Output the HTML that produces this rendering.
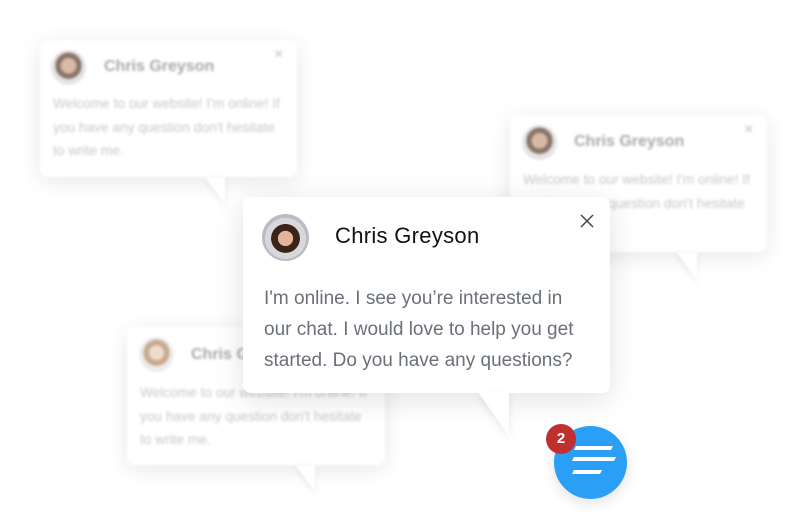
<!DOCTYPE html>
<html><head><style>
body{margin:0;width:809px;height:530px;background:#fff;position:relative;overflow:hidden;font-family:"Liberation Sans",sans-serif}
.c{position:absolute;background:#fff;border-radius:8px;box-shadow:0 4px 22px rgba(0,0,0,.1)}
.bg{filter:blur(1.2px)}
.bg .n{position:absolute;font-size:16px;font-weight:bold;color:#a9a9a9}
.bg .t{position:absolute;font-size:13.7px;line-height:23.5px;color:#c8c8c8;width:236px}
.bg .x{position:absolute;color:#bbb;font-size:16px}
.av{position:absolute;border-radius:50%;background:radial-gradient(circle at 50% 45%,#d9b8a4 0 30%,#8a7468 31% 50%,#e4e4e4 51%)}
.tail{position:absolute;width:0;height:0}
</style></head><body>

<div class="c bg" style="left:40px;top:40px;width:257px;height:137px">
 <div class="av" style="left:11px;top:10px;width:35px;height:35px"></div>
 <div class="n" style="left:64px;top:18px">Chris Greyson</div>
 <div class="x" style="left:234px;top:6px">×</div>
 <div class="t" style="left:13px;top:52px">Welcome to our website! I'm online! If you have any question don't hesitate to write me.</div>
</div>
<div class="tail bg" style="left:205px;top:177px;border-left:20px solid transparent;border-top:28px solid #fff;filter:drop-shadow(0 3px 3px rgba(0,0,0,.08)) blur(1px)"></div>

<div class="c bg" style="left:510px;top:115px;width:257px;height:137px">
 <div class="av" style="left:12px;top:10px;width:35px;height:35px"></div>
 <div class="n" style="left:64px;top:18px">Chris Greyson</div>
 <div class="x" style="left:234px;top:6px">×</div>
 <div class="t" style="left:13px;top:53px">Welcome to our website! I'm online! If you have any question don't hesitate</div>
</div>
<div class="tail bg" style="left:676px;top:252px;border-left:21px solid transparent;border-top:28px solid #fff;filter:drop-shadow(0 3px 3px rgba(0,0,0,.08)) blur(1px)"></div>

<div class="c bg" style="left:127px;top:327px;width:258px;height:138px">
 <div class="av" style="left:12px;top:10px;width:35px;height:35px;background:radial-gradient(circle at 50% 45%,#f0dccc 0 28%,#c8ab90 29% 50%,#ececec 51%)"></div>
 <div class="n" style="left:64px;top:19px">Chris Greyson</div>
 <div class="t" style="left:13px;top:54px">Welcome to our website! I'm online! If you have any question don't hesitate to write me.</div>
</div>
<div class="tail bg" style="left:295px;top:465px;border-left:20px solid transparent;border-top:27px solid #fff;filter:drop-shadow(0 3px 3px rgba(0,0,0,.08)) blur(1px)"></div>

<div class="c" style="left:243px;top:197px;width:367px;height:196px;box-shadow:0 6px 30px rgba(0,0,0,.12)">
 <div class="av" style="left:19px;top:17px;width:47px;height:47px;background:radial-gradient(circle at 50% 52%,#e2b49a 0 22%,#3a2418 23% 42%,#d6d8dc 43% 60%,#b9bcc2 61%)"></div>
 <div style="position:absolute;left:92px;top:26px;font-size:22px;color:#111;letter-spacing:.3px">Chris Greyson</div>
 <svg style="position:absolute;left:337px;top:17px" width="14" height="14"><path d="M1 1L13 13M13 1L1 13" stroke="#444" stroke-width="1.5"/></svg>
 <div style="position:absolute;left:21px;top:86px;width:326px;font-size:19px;line-height:31px;color:#6b7078">I'm online. I see you’re interested in our chat. I would love to help you get started. Do you have any questions?</div>
</div>
<div class="tail" style="left:478px;top:392px;border-left:31px solid transparent;border-top:44px solid #fff;filter:drop-shadow(0 4px 4px rgba(0,0,0,.08))"></div>

<div style="position:absolute;left:554px;top:426px;width:73px;height:73px;border-radius:50%;background:#2a9ff5;box-shadow:0 4px 14px rgba(0,0,0,.12)">
 <svg width="73" height="73"><g fill="#fff"><polygon points="22,20 59,20 57,24 20,24"/><polygon points="20,31 62,31 60,35 18,35"/><polygon points="20,44 48,44 46,48 18,48"/></g></svg>
</div>
<div style="position:absolute;left:546px;top:424px;width:30px;height:30px;border-radius:50%;background:#c0302f;color:#fff;font-weight:bold;font-size:15px;text-align:center;line-height:30px">2</div>
</body></html>
